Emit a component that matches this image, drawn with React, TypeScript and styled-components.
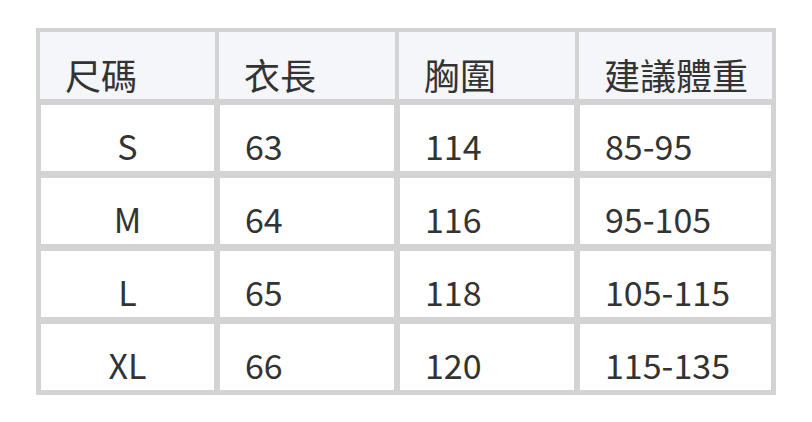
import { createGlobalStyle, styled } from 'styled-components';

const GlobalStyle = createGlobalStyle`
  body {
    margin: 0;
    background: #fff;
    font-family: "Noto Sans CJK TC", "Noto Sans", sans-serif;
  }
`;

const Page = styled.div`
  padding: 28px 36px;
`;

const Table = styled.div`
  width: 740px;
  box-sizing: border-box;
  background: #d3d3d3;
  padding: 4px;
  display: flex;
  flex-direction: column;
  gap: 4px;
`;

const Row = styled.div`
  display: grid;
  grid-template-columns: 175px 176px 176px 193px;
  gap: 4px;
`;

const Cell = styled.div<{ $head?: boolean; $center?: boolean }>`
  box-sizing: border-box;
  height: ${(p) => (p.$head ? '67px' : '68px')};
  background: ${(p) => (p.$head ? '#f5f6fa' : '#fff')};
  border: ${(p) => (p.$head ? 'none' : '1px solid #d3d3d3')};
  ${(p) => (p.$head ? '' : 'margin-top: 1px;')}
  display: flex;
  align-items: flex-end;
  justify-content: ${(p) => (p.$center ? 'center' : 'flex-start')};
  padding: 0 0 ${(p) => (p.$head ? '7px' : '8px')} ${(p) => (p.$center ? '0' : '25px')};
  font-size: ${(p) => (p.$head ? '36px' : '34px')};
  font-weight: 400;
  line-height: 1;
  color: #333;
`;

const headers = ['尺碼', '衣長', '胸圍', '建議體重'];

const rows = [
  ['S', '63', '114', '85-95'],
  ['M', '64', '116', '95-105'],
  ['L', '65', '118', '105-115'],
  ['XL', '66', '120', '115-135'],
];

export default function App() {
  return (
    <>
      <GlobalStyle />
      <Page>
        <Table>
          <Row>
            {headers.map((h) => (
              <Cell $head key={h}>
                {h}
              </Cell>
            ))}
          </Row>
          {rows.map((r) => (
            <Row key={r[0]}>
              {r.map((v, i) => (
                <Cell key={i} $center={i === 0}>
                  {v}
                </Cell>
              ))}
            </Row>
          ))}
        </Table>
      </Page>
    </>
  );
}
